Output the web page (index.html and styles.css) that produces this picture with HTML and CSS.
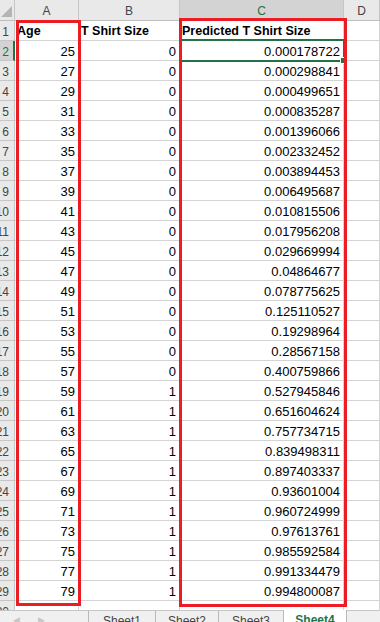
FILE: index.html
```html
<!DOCTYPE html>
<html>
<head>
<meta charset="utf-8">
<link rel="stylesheet" href="styles.css">
</head>
<body>
<div class="sheet">
  <div class="row head">
    <div class="rh corner"><span class="tri"></span></div>
    <div class="ch">A</div><div class="ch">B</div><div class="ch csel">C</div><div class="ch">D</div>
  </div>
  <div class="row"><div class="rh"><span>1</span></div><div class="c b">Age</div><div class="c b">T Shirt Size</div><div class="c b">Predicted T Shirt Size</div><div class="c"></div></div>
  <div class="row"><div class="rh rsel"><span>2</span></div><div class="c n">25</div><div class="c n">0</div><div class="c n">0.000178722</div><div class="c"></div></div>
  <div class="row"><div class="rh"><span>3</span></div><div class="c n">27</div><div class="c n">0</div><div class="c n">0.000298841</div><div class="c"></div></div>
  <div class="row"><div class="rh"><span>4</span></div><div class="c n">29</div><div class="c n">0</div><div class="c n">0.000499651</div><div class="c"></div></div>
  <div class="row"><div class="rh"><span>5</span></div><div class="c n">31</div><div class="c n">0</div><div class="c n">0.000835287</div><div class="c"></div></div>
  <div class="row"><div class="rh"><span>6</span></div><div class="c n">33</div><div class="c n">0</div><div class="c n">0.001396066</div><div class="c"></div></div>
  <div class="row"><div class="rh"><span>7</span></div><div class="c n">35</div><div class="c n">0</div><div class="c n">0.002332452</div><div class="c"></div></div>
  <div class="row"><div class="rh"><span>8</span></div><div class="c n">37</div><div class="c n">0</div><div class="c n">0.003894453</div><div class="c"></div></div>
  <div class="row"><div class="rh"><span>9</span></div><div class="c n">39</div><div class="c n">0</div><div class="c n">0.006495687</div><div class="c"></div></div>
  <div class="row"><div class="rh"><span>10</span></div><div class="c n">41</div><div class="c n">0</div><div class="c n">0.010815506</div><div class="c"></div></div>
  <div class="row"><div class="rh"><span>11</span></div><div class="c n">43</div><div class="c n">0</div><div class="c n">0.017956208</div><div class="c"></div></div>
  <div class="row"><div class="rh"><span>12</span></div><div class="c n">45</div><div class="c n">0</div><div class="c n">0.029669994</div><div class="c"></div></div>
  <div class="row"><div class="rh"><span>13</span></div><div class="c n">47</div><div class="c n">0</div><div class="c n">0.04864677</div><div class="c"></div></div>
  <div class="row"><div class="rh"><span>14</span></div><div class="c n">49</div><div class="c n">0</div><div class="c n">0.078775625</div><div class="c"></div></div>
  <div class="row"><div class="rh"><span>15</span></div><div class="c n">51</div><div class="c n">0</div><div class="c n">0.125110527</div><div class="c"></div></div>
  <div class="row"><div class="rh"><span>16</span></div><div class="c n">53</div><div class="c n">0</div><div class="c n">0.19298964</div><div class="c"></div></div>
  <div class="row"><div class="rh"><span>17</span></div><div class="c n">55</div><div class="c n">0</div><div class="c n">0.28567158</div><div class="c"></div></div>
  <div class="row"><div class="rh"><span>18</span></div><div class="c n">57</div><div class="c n">0</div><div class="c n">0.400759866</div><div class="c"></div></div>
  <div class="row"><div class="rh"><span>19</span></div><div class="c n">59</div><div class="c n">1</div><div class="c n">0.527945846</div><div class="c"></div></div>
  <div class="row"><div class="rh"><span>20</span></div><div class="c n">61</div><div class="c n">1</div><div class="c n">0.651604624</div><div class="c"></div></div>
  <div class="row"><div class="rh"><span>21</span></div><div class="c n">63</div><div class="c n">1</div><div class="c n">0.757734715</div><div class="c"></div></div>
  <div class="row"><div class="rh"><span>22</span></div><div class="c n">65</div><div class="c n">1</div><div class="c n">0.839498311</div><div class="c"></div></div>
  <div class="row"><div class="rh"><span>23</span></div><div class="c n">67</div><div class="c n">1</div><div class="c n">0.897403337</div><div class="c"></div></div>
  <div class="row"><div class="rh"><span>24</span></div><div class="c n">69</div><div class="c n">1</div><div class="c n">0.93601004</div><div class="c"></div></div>
  <div class="row"><div class="rh"><span>25</span></div><div class="c n">71</div><div class="c n">1</div><div class="c n">0.960724999</div><div class="c"></div></div>
  <div class="row"><div class="rh"><span>26</span></div><div class="c n">73</div><div class="c n">1</div><div class="c n">0.97613761</div><div class="c"></div></div>
  <div class="row"><div class="rh"><span>27</span></div><div class="c n">75</div><div class="c n">1</div><div class="c n">0.985592584</div><div class="c"></div></div>
  <div class="row"><div class="rh"><span>28</span></div><div class="c n">77</div><div class="c n">1</div><div class="c n">0.991334479</div><div class="c"></div></div>
  <div class="row"><div class="rh"><span>29</span></div><div class="c n">79</div><div class="c n">1</div><div class="c n">0.994800087</div><div class="c"></div></div>
  <div class="row last"><div class="rh"><span>30</span></div><div class="c"></div><div class="c"></div><div class="c"></div><div class="c"></div></div>
  <div class="tabs">
    <div class="nav"><span class="arr">&#9664;</span><span class="arr">&#9654;</span></div>
    <div class="tab t1">Sheet1</div>
    <div class="tab t2">Sheet2</div>
    <div class="tab t3">Sheet3</div>
    <div class="tab t4 active">Sheet4</div>
    <div class="tab rest"></div>
  </div>
  <div class="selbox"><span class="handle"></span></div>
  <div class="mark mark-a"></div>
  <div class="mark mark-c"></div>
</div>
</body>
</html>
```

FILE: styles.css
```css
html, body {
  margin: 0;
  padding: 0;
  background: #ffffff;
}
.sheet {
  position: relative;
  width: 380px;
  height: 622px;
  overflow: hidden;
  font-family: "Liberation Sans", Arial, sans-serif;
  font-size: 13px;
  color: #000;
}
.row {
  display: grid;
  grid-template-columns: 15px 64px 101px 164px 1fr;
  height: 20px;
}
.row > div {
  box-sizing: border-box;
  border-right: 1px solid #d4d4d4;
  border-bottom: 1px solid #d4d4d4;
  overflow: hidden;
  white-space: nowrap;
}
.row.head {
  height: 21px;
}
.row.head > div {
  background: #e9e9e9;
  border-right: 1px solid #c6c6c6;
  border-bottom: 1px solid #bdbdbd;
  color: #444;
  font-size: 12px;
  text-align: center;
  line-height: 14px;
  padding-top: 4px;
}
.row.head > .csel {
  background: #d3d3d3;
  color: #217346;
  border-bottom: 2px solid #217346;
}
.corner {
  position: relative;
}
.tri {
  position: absolute;
  right: 2px;
  bottom: 3px;
  width: 0;
  height: 0;
  border-left: 11px solid transparent;
  border-bottom: 11px solid #b5b5b5;
}
.row > .rh {
  background: #e9e9e9;
  border-right: 1px solid #c6c6c6;
  border-bottom: 1px solid #c6c6c6;
  color: #444;
  font-size: 12px;
  display: flex;
  justify-content: flex-end;
  padding-right: 5px;
  line-height: 14px;
  padding-top: 4px;
}
.row > .rh span {
  flex: none;
}
.row > .rsel {
  background: #d3d3d3;
  color: #217346;
  border-right: 2px solid #217346;
  padding-right: 4px;
}
.c {
  line-height: 15px;
  padding: 3px 3px 0 2px;
}
.c.n {
  text-align: right;
}
.c.b {
  font-weight: bold;
  font-size: 12.5px;
}
.row.last {
  height: 9px;
}
.row.last > div {
  border-bottom: none;
}
.tabs {
  display: flex;
  height: 13px;
  box-sizing: border-box;
  background: #f0f0f0;
  border-top: 1px solid #c6c6c6;
  font-size: 12px;
  color: #444;
}
.nav {
  width: 88px;
  flex: none;
  display: flex;
  gap: 18px;
  padding-left: 13px;
  box-sizing: border-box;
  color: #c8c8c8;
  font-size: 9px;
  line-height: 10px;
  padding-top: 4px;
}
.tab {
  flex: none;
  box-sizing: border-box;
  border-left: 1px solid #b9b9b9;
  text-align: center;
  line-height: 14px;
  padding-top: 3px;
}
.t1 { width: 67px; }
.t2 { width: 63px; }
.t3 { width: 65px; }
.t4 { width: 64px; }
.tab.active {
  background: #ffffff;
  color: #217346;
  font-weight: bold;
  border-right: 1px solid #b9b9b9;
  margin-top: -1px;
}
.tab.rest {
  flex: 1;
  border-left: none;
}
.selbox {
  position: absolute;
  left: 180px;
  top: 39px;
  width: 165px;
  height: 23px;
  box-sizing: border-box;
  border: 2px solid #217346;
}
.handle {
  position: absolute;
  right: -4px;
  bottom: -4px;
  width: 5px;
  height: 5px;
  background: #217346;
  border: 1px solid #fff;
}
.mark {
  position: absolute;
  box-sizing: border-box;
  border: 3px solid #ec1c24;
}
.mark-a {
  left: 16px;
  top: 20px;
  width: 65px;
  height: 586px;
}
.mark-c {
  left: 179px;
  top: 18px;
  width: 168px;
  height: 589px;
}
```
